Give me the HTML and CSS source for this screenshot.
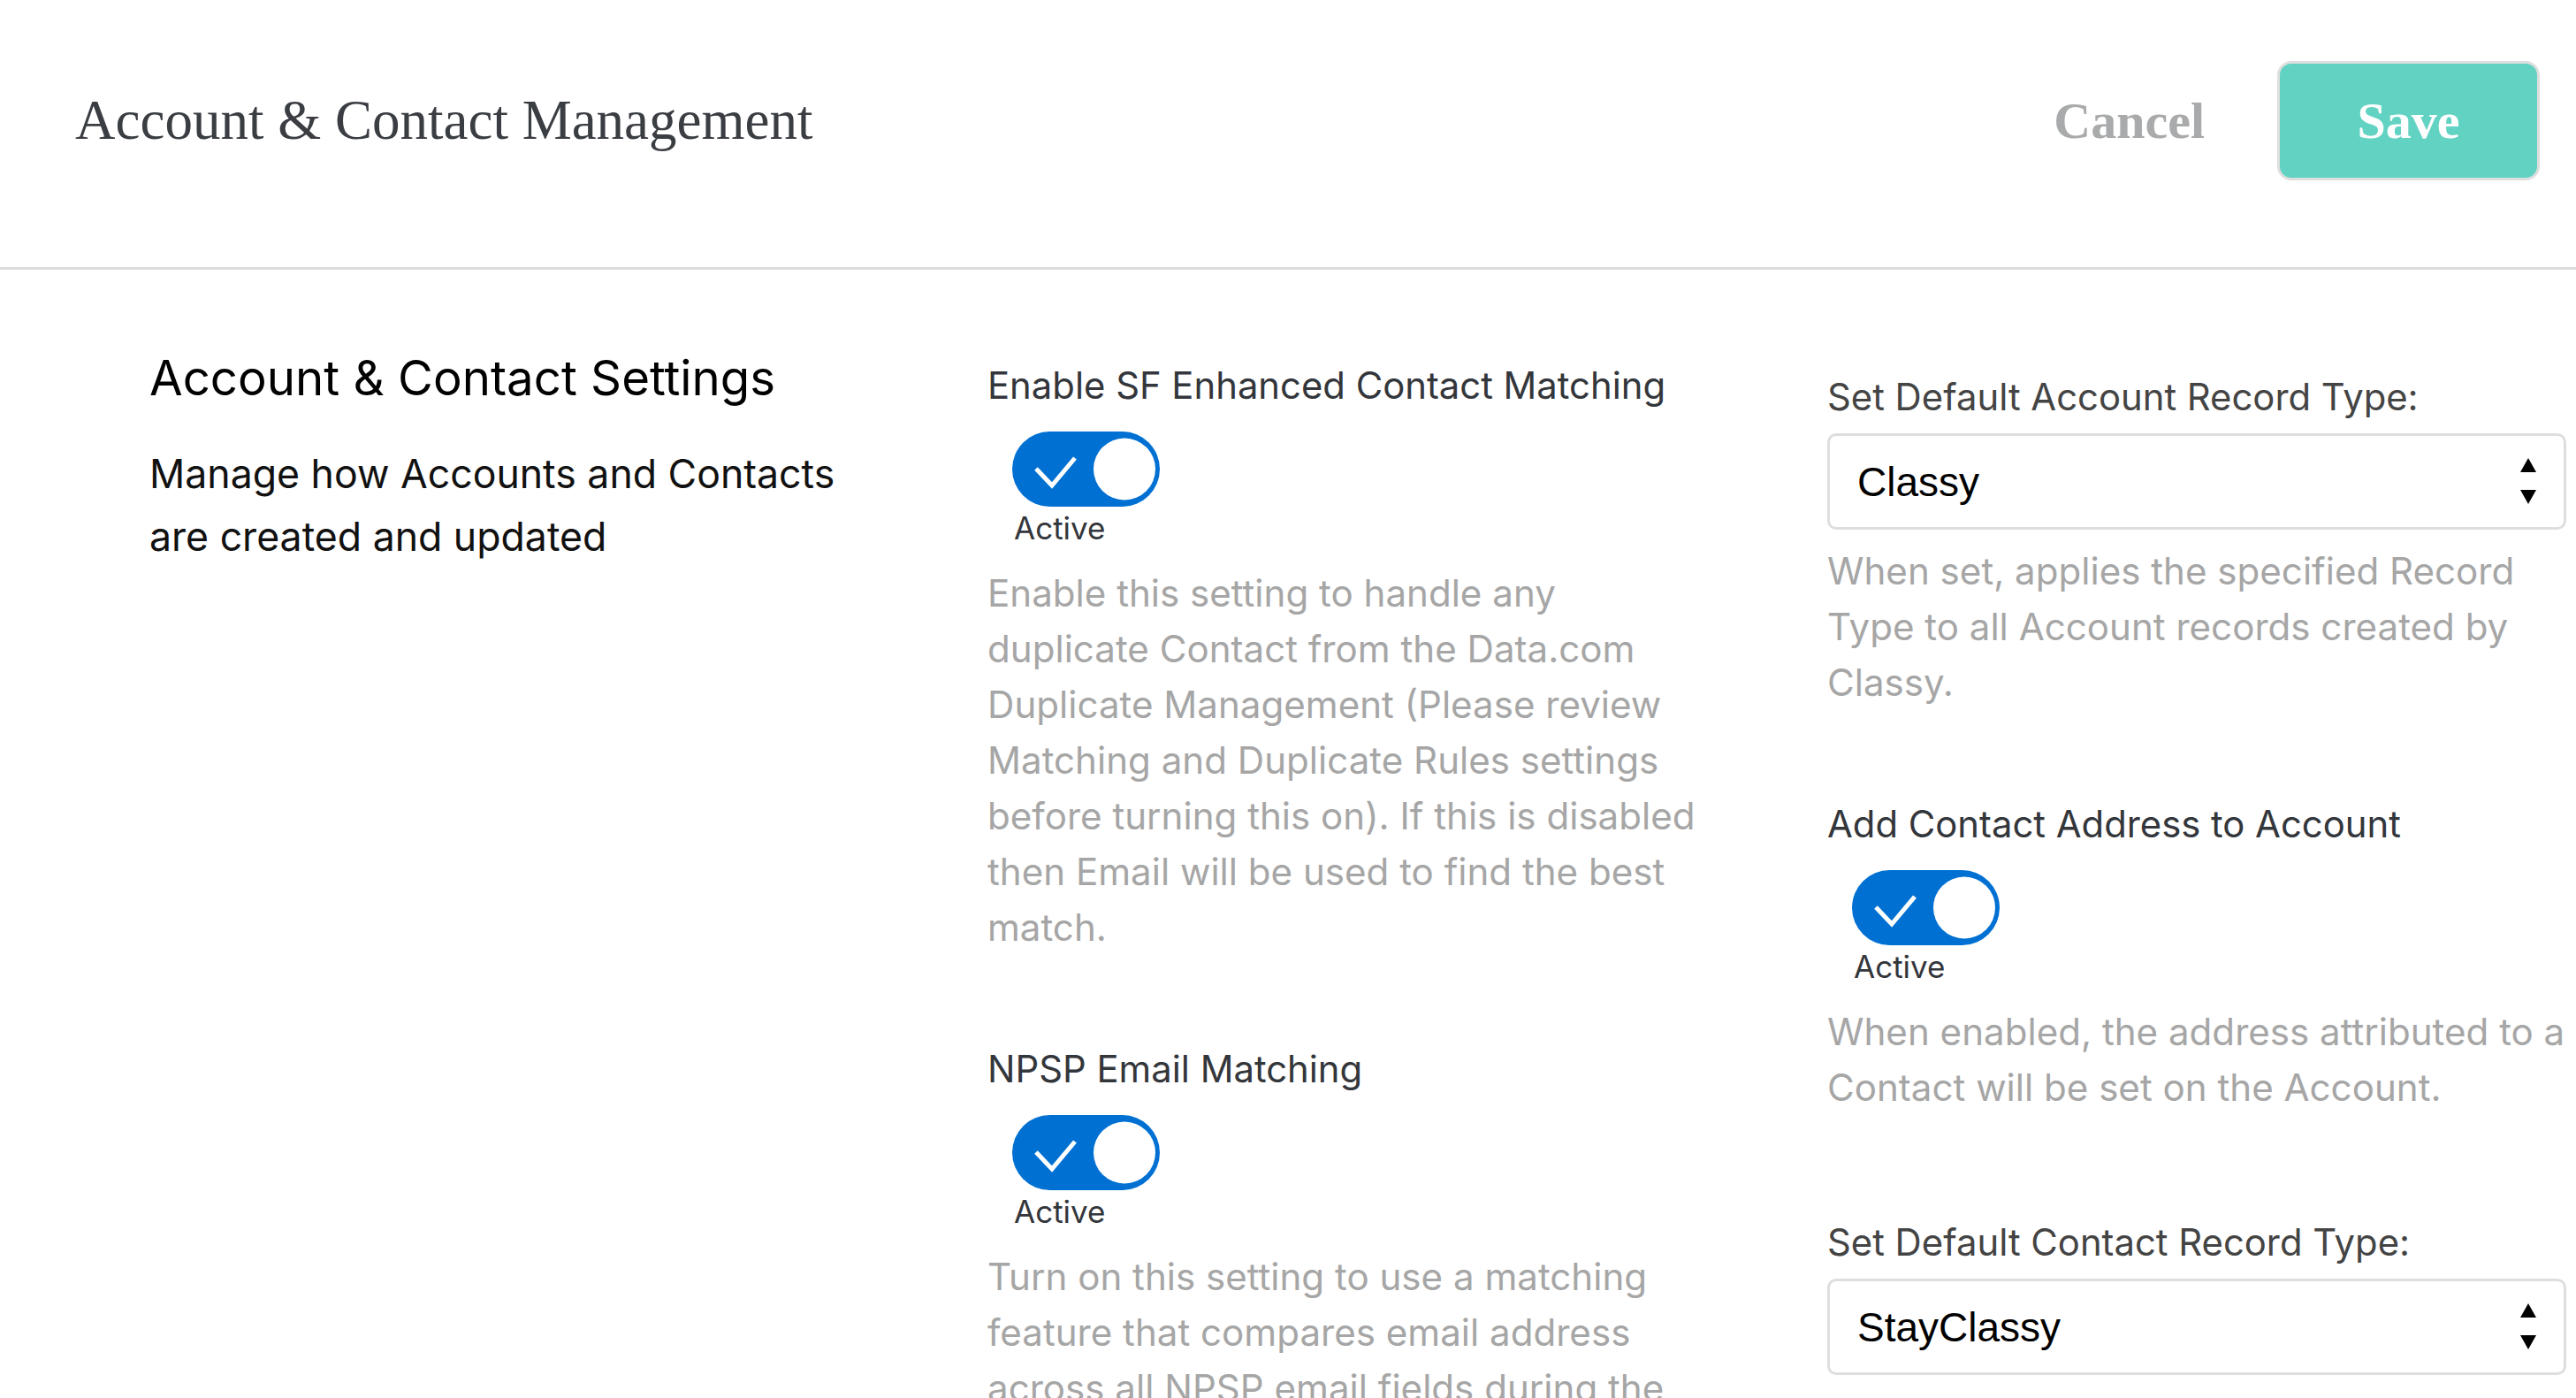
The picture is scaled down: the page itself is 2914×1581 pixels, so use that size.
FILE: index.html
```html
<html>
<head>
	<link rel="stylesheet" href="styles.css">
</head>
<body>
	<div class="header">
		<h1 class="page_title">Account &amp; Contact Management</h1>
		<div class="actions">
			<button class="btn_cancel">Cancel</button>
			<button class="btn_save">Save</button>
		</div>
	</div>

	<div class="settings">
		<div class="col intro">
			<h2>Account &amp; Contact Settings</h2>
			<p>Manage how Accounts and Contacts<br/>are created and updated</p>
		</div>

		<div class="col col_mid">
			<div class="field">
				<div class="label">Enable SF Enhanced Contact Matching</div>
				<div class="toggle">
					<svg width="167" height="85" viewBox="0 0 167 85">
						<rect x="0" y="0" width="167" height="85" rx="42.5" fill="#0070d2"/>
						<circle cx="127" cy="42.5" r="35" fill="#fff"/>
						<polyline points="27,42 45,61 71,30" fill="none" stroke="#fff" stroke-width="5"/>
					</svg>
				</div>
				<div class="state">Active</div>
				<p class="help">Enable this setting to handle any<br/>duplicate Contact from the Data.com<br/>Duplicate Management (Please review<br/>Matching and Duplicate Rules settings<br/>before turning this on). If this is disabled<br/>then Email will be used to find the best<br/>match.</p>
			</div>

			<div class="field">
				<div class="label">NPSP Email Matching</div>
				<div class="toggle">
					<svg width="167" height="85" viewBox="0 0 167 85">
						<rect x="0" y="0" width="167" height="85" rx="42.5" fill="#0070d2"/>
						<circle cx="127" cy="42.5" r="35" fill="#fff"/>
						<polyline points="27,42 45,61 71,30" fill="none" stroke="#fff" stroke-width="5"/>
					</svg>
				</div>
				<div class="state">Active</div>
				<p class="help">Turn on this setting to use a matching<br/>feature that compares email address<br/>across all NPSP email fields during the</p>
			</div>
		</div>

		<div class="col col_right">
			<div class="field">
				<div class="label label_light">Set Default Account Record Type:</div>
				<div class="select">
					<span>Classy</span>
					<svg width="20" height="56" viewBox="0 0 20 56">
						<polygon points="10,1 19,17 1,17" fill="#000"/>
						<polygon points="1,37 19,37 10,53" fill="#000"/>
					</svg>
				</div>
				<p class="help help_select">When set, applies the specified Record<br/>Type to all Account records created by<br/>Classy.</p>
			</div>

			<div class="field">
				<div class="label">Add Contact Address to Account</div>
				<div class="toggle">
					<svg width="167" height="85" viewBox="0 0 167 85">
						<rect x="0" y="0" width="167" height="85" rx="42.5" fill="#0070d2"/>
						<circle cx="127" cy="42.5" r="35" fill="#fff"/>
						<polyline points="27,42 45,61 71,30" fill="none" stroke="#fff" stroke-width="5"/>
					</svg>
				</div>
				<div class="state">Active</div>
				<p class="help">When enabled, the address attributed to a<br/>Contact will be set on the Account.</p>
			</div>

			<div class="field field_last">
				<div class="label label_light">Set Default Contact Record Type:</div>
				<div class="select">
					<span>StayClassy</span>
					<svg width="20" height="56" viewBox="0 0 20 56">
						<polygon points="10,1 19,17 1,17" fill="#000"/>
						<polygon points="1,37 19,37 10,53" fill="#000"/>
					</svg>
				</div>
			</div>
		</div>
	</div>
</body>
</html>
```

FILE: styles.css
```css
	body{
		margin: 0;
		background: #fff;
		font-family: Inter, "Noto Sans", sans-serif;
		overflow: hidden;
	}

	.header{
		display: flex;
		align-items: center;
		justify-content: space-between;
		box-sizing: border-box;
		height: 305px;
		padding: 0 41px 29px 85px;
		border-bottom: 3px solid #dcdcdc;
	}
	.page_title{
		margin: 0;
		font-family: "Liberation Serif", serif;
		font-weight: normal;
		font-size: 63px;
		color: #3a3d42;
	}
	.actions{
		display: flex;
		align-items: center;
		gap: 82px;
	}
	.btn_cancel, .btn_save{
		font-family: "Liberation Serif", serif;
		font-weight: bold;
		font-size: 58px;
		cursor: pointer;
	}
	.btn_cancel{
		background: none;
		border: none;
		padding: 0;
		color: #a9aaab;
	}
	.btn_save{
		width: 297px;
		height: 135px;
		background: #62d2c3;
		border: 3px solid #dedede;
		border-radius: 16px;
		color: #fff;
	}

	.settings{
		display: grid;
		grid-template-columns: 948px 950px 836px;
		padding: 88px 0 0 169px;
	}

	.intro h2{
		margin: 0;
		font-size: 54.6px;
		line-height: 68px;
		font-weight: normal;
		color: #000;
	}
	.intro p{
		margin: 40px 0 0 0;
		font-size: 44.6px;
		line-height: 71px;
		color: #111;
	}

	.col_mid{
		padding-top: 18px;
	}
	.col_right{
		padding-top: 31px;
	}

	.field + .field{
		margin-top: 104px;
	}
	.field_last{
		margin-top: 119px !important;
	}
	.label{
		font-size: 41.8px;
		line-height: 50px;
		color: #33363b;
	}
	.label_light{
		color: #444;
	}
	.toggle{
		margin: 27px 0 0 28px;
		height: 85px;
	}
	.toggle svg{
		display: block;
	}
	.state{
		margin: 3px 0 0 30px;
		font-size: 35px;
		line-height: 42px;
		color: #33363b;
	}
	.help{
		margin: 21px 0 0 0;
		font-size: 42.1px;
		line-height: 63px;
		color: #a6a6a6;
		white-space: nowrap;
	}
	.help_select{
		margin-top: 15px;
	}

	.select{
		display: flex;
		align-items: center;
		justify-content: space-between;
		box-sizing: border-box;
		height: 109px;
		margin-top: 16px;
		padding: 0 30px 0 31px;
		border: 3px solid #dedede;
		border-radius: 10px;
		font-family: "Liberation Sans", Arial, sans-serif;
		font-size: 46px;
		color: #000;
	}
	.select svg{
		display: block;
	}
```
